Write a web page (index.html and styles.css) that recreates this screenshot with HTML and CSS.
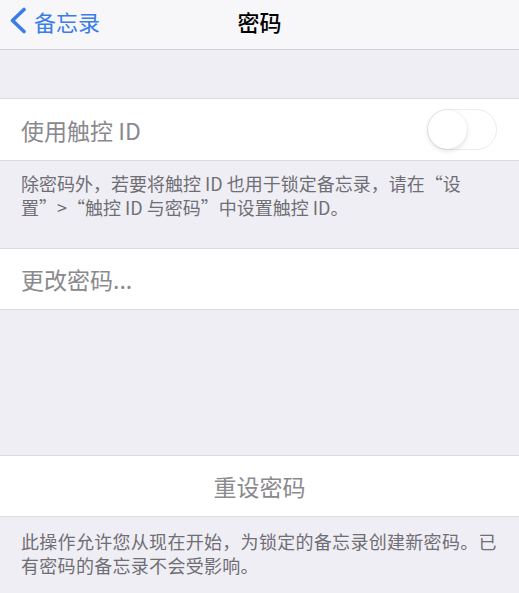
FILE: index.html
```html
<!DOCTYPE html>
<html lang="zh-CN">

<head>
    <meta charset="UTF-8">
    <meta name="viewport" content="width=device-width, initial-scale=1.0">
    <title>密码</title>
    <link rel="stylesheet" href="styles.css">
</head>

<body>
    <div class="navbar">
        <a class="back" href="#">
            <svg class="chevron" width="22" height="28" viewBox="0 0 22 28">
                <path d="M17 2.5 L5.5 13.5 L17 24.5" fill="none" stroke="#3a7ce8" stroke-width="3.6" stroke-linecap="round" stroke-linejoin="round" />
            </svg>
            <span>备忘录</span>
        </a>
        <div class="title">密码</div>
    </div>

    <div class="spacer"></div>

    <div class="group">
        <div class="cell">
            <span class="label">使用触控 ID</span>
            <div class="toggle">
                <div class="knob"></div>
            </div>
        </div>
    </div>
    <div class="footer footer-1">
        除密码外，若要将触控 ID 也用于锁定备忘录，请在“设<br>置”&gt;“触控 ID 与密码”中设置触控 ID。
    </div>

    <div class="group">
        <div class="cell cell-2">
            <span class="label">更改密码...</span>
        </div>
    </div>

    <div class="big-gap"></div>

    <div class="group">
        <div class="cell cell-3">
            <span class="label center">重设密码</span>
        </div>
    </div>
    <div class="footer footer-2">
        此操作允许您从现在开始，为锁定的备忘录创建新密码。已<br>有密码的备忘录不会受影响。
    </div>
</body>
</html>
```

FILE: styles.css
```css
body {
    margin: 0;
    background-color: #efeef5;
    font-family: "Noto Sans CJK SC", "Noto Sans", sans-serif;
    color: #000;
}

.navbar {
    position: relative;
    height: 42px;
    padding-bottom: 7px;
    background-color: #f7f7f9;
    border-bottom: 1px solid #cfcfd4;
    display: flex;
    align-items: center;
    justify-content: center;
}

.back {
    position: absolute;
    left: 7px;
    top: 7px;
    display: flex;
    align-items: center;
    color: #3a7ce8;
    text-decoration: none;
    font-size: 22px;
    line-height: 28px;
}

.back span {
    margin-left: 5px;
}

.title {
    font-size: 22px;
    font-weight: 500;
    line-height: 26px;
    margin-top: -1px;
}

.spacer {
    height: 48px;
}

.group {
    background-color: #fff;
    border-top: 1px solid #dcdce0;
    border-bottom: 1px solid #dcdce0;
}

.cell {
    height: 61px;
    display: flex;
    align-items: center;
    justify-content: space-between;
    padding: 0 21px;
}

.cell-2 {
    height: 60px;
}

.cell-3 {
    justify-content: center;
    height: 60px;
}

.label {
    font-size: 23px;
    color: #8a898e;
    line-height: 28px;
}

.toggle {
    width: 68px;
    height: 39px;
    border: 1.5px solid #ececef;
    border-radius: 21px;
    margin-right: 1px;
    position: relative;
    background-color: #fff;
}

.knob {
    position: absolute;
    left: 0;
    top: 0;
    width: 39px;
    height: 39px;
    border-radius: 50%;
    background-color: #fff;
    box-shadow: 0 2px 5px rgba(0, 0, 0, 0.12), 0 0 1px rgba(0, 0, 0, 0.1);
}

.footer {
    font-size: 18px;
    line-height: 24px;
    color: #6f6e74;
    padding: 10px 21px 0;
}

.footer-1 {
    height: 77px;
}

.footer-2 {
    padding-top: 12px;
    letter-spacing: 0.3px;
}

.big-gap {
    height: 145px;
}
```
